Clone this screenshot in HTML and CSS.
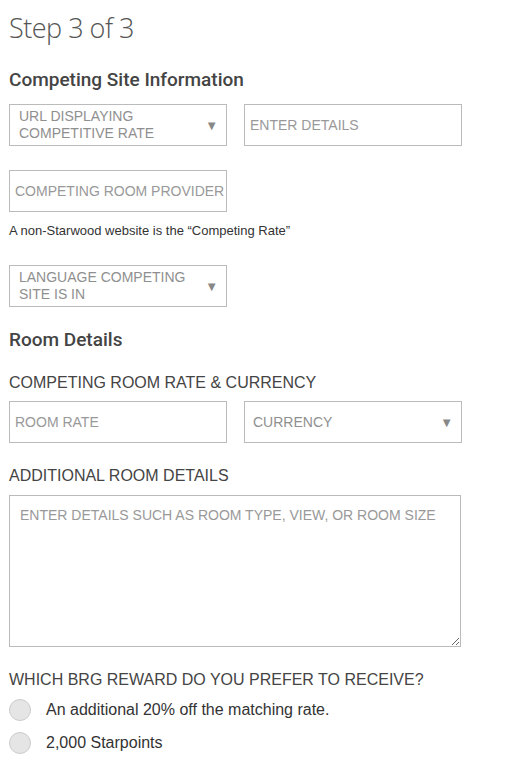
FILE: index.html
```html
<!DOCTYPE html>
<html lang="en">
<head>
    <meta charset="UTF-8">
    <meta name="viewport" content="width=device-width, initial-scale=1.0">
    <title>Best Rate Guarantee - Step 3</title>
    <link rel="stylesheet" href="styles.css">
</head>
<body>
    <!-- step 3 of the best rate guarantee claim form -->
    <div class="form-wrap">
        <h1 class="step-title">Step 3 of 3</h1>

        <!-- competing site -->
        <section class="group site-group">
            <h2 class="group-title">Competing Site Information</h2>
            <div class="row">
                <div class="select two-line">
                    <span>URL DISPLAYING COMPETITIVE RATE</span>
                    <span class="arrow">&#9660;</span>
                </div>
                <input type="text" class="field" placeholder="ENTER DETAILS">
            </div>
            <div class="row">
                <input type="text" class="field" placeholder="COMPETING ROOM PROVIDER">
            </div>
            <p class="hint">A non-Starwood website is the &ldquo;Competing Rate&rdquo;</p>
            <div class="row row-last">
                <div class="select two-line">
                    <span>LANGUAGE COMPETING SITE IS IN</span>
                    <span class="arrow">&#9660;</span>
                </div>
            </div>
        </section>

        <!-- room details -->
        <section class="group room-group">
            <h2 class="group-title">Room Details</h2>
            <label class="label">COMPETING ROOM RATE &amp; CURRENCY</label>
            <div class="row row-last">
                <input type="text" class="field" placeholder="ROOM RATE">
                <div class="select">
                    <span>CURRENCY</span>
                    <span class="arrow">&#9660;</span>
                </div>
            </div>

            <label class="label details-label">ADDITIONAL ROOM DETAILS</label>
            <textarea class="details" placeholder="ENTER DETAILS SUCH AS ROOM TYPE, VIEW, OR ROOM SIZE"></textarea>

            <label class="label reward-label">WHICH BRG REWARD DO YOU PREFER TO RECEIVE?</label>
            <div class="radio-row">
                <span class="radio"></span>
                <span>An additional 20% off the matching rate.</span>
            </div>
            <div class="radio-row">
                <span class="radio"></span>
                <span>2,000 Starpoints</span>
            </div>
        </section>
    </div>
</body>
</html>
```
FILE: styles.css
```css
* {
    margin: 0;
    padding: 0;
    box-sizing: border-box;
}

body {
    background: #fff;
    font-family: "Liberation Sans", Arial, sans-serif;
    color: #333;
}

.form-wrap {
    width: 470px;
    padding: 11px 9px 0 9px;
}

.step-title {
    font-family: "Open Sans", sans-serif;
    font-weight: 300;
    font-size: 27px;
    line-height: 34px;
    color: #555;
    letter-spacing: -0.5px;
}

.group-title {
    font-family: Roboto, "Open Sans", sans-serif;
    font-weight: 500;
    font-size: 19px;
    line-height: 24px;
    color: #444;
}

.site-group .group-title {
    margin-top: 23px;
    margin-bottom: 12px;
}

.room-group .group-title {
    margin-top: 21px;
}

.row {
    display: grid;
    grid-template-columns: 218px 218px;
    column-gap: 17px;
    margin-bottom: 24px;
}

.row-last {
    margin-bottom: 0;
}

.field {
    height: 42px;
    width: 100%;
    border: 1px solid #bbb;
    padding: 0 0 0 5px;
    font-family: "Liberation Sans", Arial, sans-serif;
    font-size: 14px;
    color: #333;
    outline: none;
    background: #fff;
}

.field::placeholder {
    color: #999;
}

.select {
    height: 42px;
    border: 1px solid #bbb;
    padding: 0 8px 0 8px;
    display: flex;
    align-items: center;
    justify-content: space-between;
    font-size: 14px;
    color: #8f8f8f;
}

.select.two-line {
    padding-left: 9px;
    line-height: 17px;
}

.select.two-line span:first-child {
    width: 170px;
}

.arrow {
    font-size: 13px;
    color: #888;
}

.hint {
    font-size: 13px;
    line-height: 15px;
    margin-top: -13px;
    margin-bottom: 27px;
    color: #333;
}

.label {
    display: block;
    font-size: 16px;
    line-height: 20px;
    color: #444;
    margin-top: 21px;
    margin-bottom: 8px;
}

.details-label {
    margin-top: 23px;
    margin-bottom: 9px;
}

.details {
    display: block;
    width: 452px;
    height: 152px;
    border: 1px solid #bbb;
    padding: 11px 10px;
    font-family: "Liberation Sans", Arial, sans-serif;
    font-size: 14px;
    resize: both;
    outline: none;
}

.details::placeholder {
    color: #999;
}

.reward-label {
    margin-top: 23px;
    margin-bottom: 3px;
}

.radio-row {
    display: flex;
    align-items: center;
    gap: 15px;
    font-size: 16px;
    color: #333;
    height: 33px;
}

.radio {
    width: 22px;
    height: 22px;
    border-radius: 50%;
    background: #e5e5e5;
    border: 1px solid #ccc;
}
```
